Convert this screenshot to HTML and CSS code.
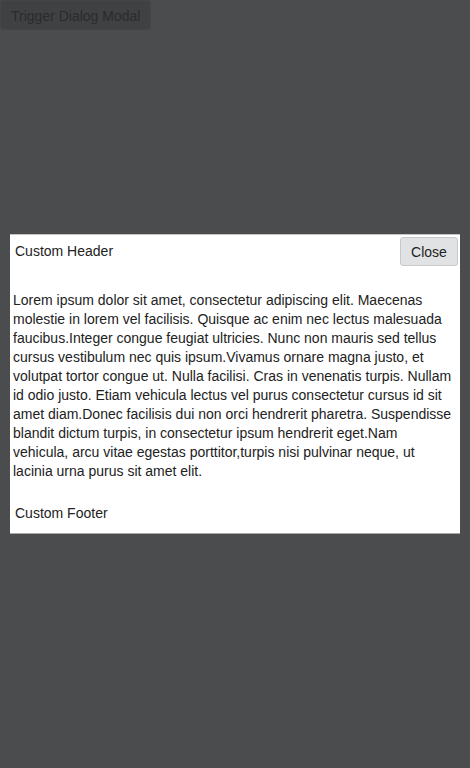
FILE: index.html
```html
<!DOCTYPE html>
<html>
<head>
<meta charset="utf-8">
<link rel="stylesheet" href="styles.css">
</head>
<body>
<button class="trigger">Trigger Dialog Modal</button>
<div class="backdrop"></div>
<div class="dialog">
  <div class="dialog-header">
    <span class="title">Custom Header</span>
    <button class="close">Close</button>
  </div>
  <div class="dialog-body">
    <p>Lorem ipsum dolor sit amet, consectetur adipiscing elit. Maecenas molestie in lorem vel facilisis. Quisque ac enim nec lectus malesuada faucibus.Integer congue feugiat ultricies. Nunc non mauris sed tellus cursus vestibulum nec quis ipsum.Vivamus ornare magna justo, et volutpat tortor congue ut. Nulla facilisi. Cras in venenatis turpis. Nullam id odio justo. Etiam vehicula lectus vel purus consectetur cursus id sit amet diam.Donec facilisis dui non orci hendrerit pharetra. Suspendisse blandit dictum turpis, in consectetur ipsum hendrerit eget.Nam vehicula, arcu vitae egestas porttitor,turpis nisi pulvinar neque, ut lacinia urna purus sit amet elit.</p>
  </div>
  <div class="dialog-footer">Custom Footer</div>
</div>
</body>
</html>
```
FILE: styles.css
```css
html, body {
  margin: 0;
  padding: 0;
  height: 100%;
}
body {
  background: #fafafa;
  font-family: "Liberation Sans", Arial, sans-serif;
  font-size: 14px;
  color: #333;
}
.trigger {
  display: block;
  margin: 0;
  width: 151px;
  height: 30px;
  padding: 1px 10px 0;
  white-space: nowrap;
  font-family: "Liberation Sans", Arial, sans-serif;
  font-size: 14px;
  color: #8c8c8c;
  background: #d7d7d7;
  border: 1px solid #e2e2e4;
  border-radius: 3px;
  text-align: left;
}
.backdrop {
  position: fixed;
  inset: 0;
  background: rgba(2, 4, 6, 0.71);
}
.dialog {
  position: fixed;
  top: 234px;
  left: 10px;
  width: 450px;
  height: 300px;
  box-sizing: border-box;
  background: #fff;
  border-top: 1px solid #c4c4c4;
  border-bottom: 1px solid #a8a8a8;
  display: flex;
  flex-direction: column;
  color: #222;
}
.dialog-header {
  display: flex;
  align-items: center;
  justify-content: space-between;
  padding: 1px 2px 0 5px;
  height: 32px;
  box-sizing: border-box;
}
.title {
  margin-top: -1px;
}
.close {
  width: 58px;
  height: 29px;
  margin: 0;
  padding: 0;
  font-family: "Liberation Sans", Arial, sans-serif;
  font-size: 14px;
  color: #222;
  background: #e1e2e4;
  border: 1px solid #c8c9cb;
  border-radius: 3px;
}
.dialog-body {
  padding: 24px 5px 0 3px;
}
.dialog-body p {
  margin: 0;
  line-height: 19px;
}
.dialog-footer {
  padding: 23px 5px 0 5px;
  line-height: 19px;
}
```
